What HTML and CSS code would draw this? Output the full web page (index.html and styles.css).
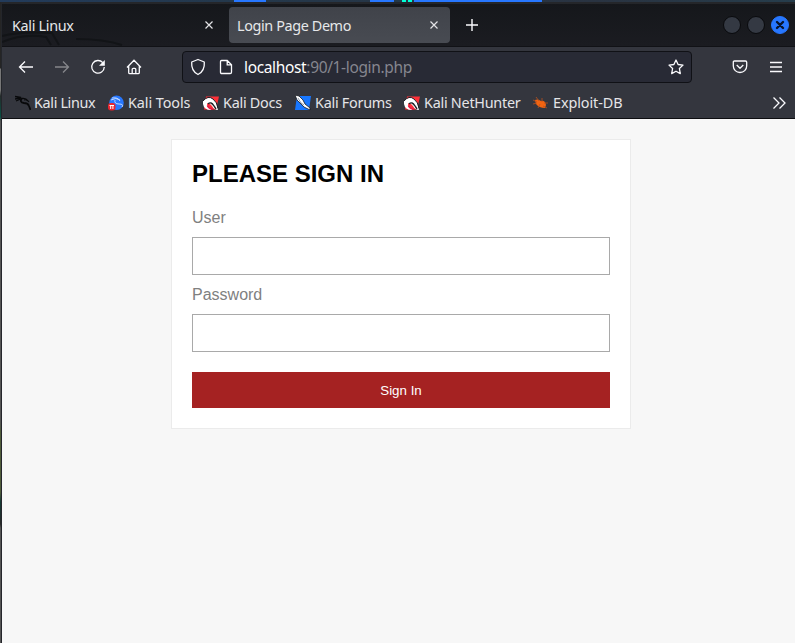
FILE: index.html
```
<!DOCTYPE html>
<html lang="en">
<head>
<meta charset="utf-8">
<title>Login Page Demo</title>
<link rel="stylesheet" href="styles.css">
</head>
<body>
<div class="desktop">
<div class="window">
  <header class="tabs">
    <svg class="dragon-art" width="160" height="16" viewBox="0 0 160 16" fill="none"><path d="M0 6Q18 1 50 3L57 15M0 12Q22 3 44 7L49 15M74 9Q102 9 120 15" stroke="#121417" stroke-width="2"/></svg>
    <div class="tab"><span>Kali Linux</span><svg class="close" width="10" height="10" viewBox="0 0 10 10"><path d="M1.5 1.5l7 7m0-7l-7 7"/></svg></div>
    <div class="tab active"><span class="wide">Login Page Demo</span><svg class="close" width="10" height="10" viewBox="0 0 10 10"><path d="M1.5 1.5l7 7m0-7l-7 7"/></svg></div>
    <svg class="plus" width="14" height="14" viewBox="0 0 14 14"><path d="M7 1v12M1 7h12"/></svg>
    <div class="controls"><i></i><i></i><i class="quit"><svg width="10" height="10" viewBox="0 0 10 10"><path d="M2 2l6 6m0-6L2 8" stroke="#08142b" stroke-width="2.4" stroke-linecap="round"/></svg></i></div>
  </header>
  <nav class="toolbar">
    <svg class="ico" width="16" height="16" viewBox="0 0 16 16"><path d="M15 8H1.700M7 2.500L1.500 8 7 13.500"/></svg>
    <svg class="ico dim" width="16" height="16" viewBox="0 0 16 16"><path d="M1 8h13.300M9 2.500L14.500 8 9 13.500"/></svg>
    <svg class="ico" width="16" height="16" viewBox="0 0 16 16"><path d="M12.800 3.700A6.300 6.300 0 1 0 14.300 8"/><path d="M14.800 1v5.800H9z" fill="#fbfbfe" stroke="none"/></svg>
    <svg class="ico" width="16" height="16" viewBox="0 0 16 16"><path d="M1 8.500L8 1.300 15 8.500M2.700 7.300v6.100q0 1.200 1.200 1.200h8.200q1.200 0 1.200-1.200V7.300M6.200 14.300v-4q0-1 1-1h1.600q1 0 1 1v4"/></svg>
    <div class="address">
      <svg class="ico" width="16" height="18" viewBox="0 0 16 18"><path d="M8 1.500L14.300 4Q15 13 8 16.500 1 13 1.700 4z" stroke-linejoin="round"/></svg>
      <svg class="ico page" width="14" height="16" viewBox="0 0 14 16"><path d="M2.500 1.500h5.700l4.300 4.300v7.400q0 1.300-1.300 1.300H2.800q-1.300 0-1.300-1.300V2.500q0-1 1-1zM8.200 1.500v4.300h4.300"/></svg>
      <span class="url">localhost<b>:90/1-login.php</b></span>
      <svg class="ico star" width="16" height="16" viewBox="0 0 16 16"><path d="M8 1l2.100 4.500 4.900.6-3.600 3.400.9 5.100L8 12.200l-4.300 2.400.9-5.100L1 6.100l4.900-.6z" stroke-linejoin="round"/></svg>
    </div>
    <svg class="ico pocket" width="16" height="16" viewBox="0 0 16 16"><path d="M2.500 2h11q1.200 0 1.200 1.200V7a6.700 6.500 0 0 1-13.400 0V3.200Q1.300 2 2.500 2zM4.700 6L8 9.200 11.300 6" stroke-linejoin="round"/></svg>
    <svg class="ico menu" width="12" height="12" viewBox="0 0 12 12"><path d="M0 1.500h12M0 6h12M0 10.500h12"/></svg>
  </nav>
  <nav class="bookmarks">
    <a class="linux"><svg width="16" height="16" viewBox="0 0 16 16" fill="none" stroke="#08090b"><path d="M0 1.500l6 1M0 4l5-1M1 6l6-2.500Q11 3 13 6" stroke-width="1.300"/><path d="M7 3Q4 7.500 9 8q4 0 5 3l1.500 4" stroke-width="1.800"/><path d="M9 5q3-1 5 2" stroke-width="1.200"/></svg>Kali Linux</a>
    <a class="tools"><svg width="16" height="16" viewBox="0 0 16 16" fill="none"><circle cx="8.500" cy="7.800" r="7.300" fill="#2777ff"/><path d="M3 5q5-3 9 0M4 3q6-1 8 3M7 5q-1 4 4 4t3 3" stroke="#bfd8ff" stroke-width="1"/><rect x="0" y="8" width="7.500" height="7.500" rx="3" fill="#e9252f"/><path d="M1.500 10.500h4.500M2.700 10.500v3.500M4.900 10.500v3.500" stroke="#fff"/></svg>Kali Tools</a>
    <a><svg width="16" height="16" viewBox="0 0 16 16"><path d="M3 1.500h13l-3 13H1z" fill="#ff3038"/><path d="M0 6q5-6 10-2 4 3 4 8l1 3q-4 0-6-4Q5 6 4 9q0 4 4 4v2Q1 15 0 9z" fill="#fff"/><path d="M0 6q5-6 10-2 4 3 5 9" fill="none" stroke="#202127" stroke-width="1"/><path d="M5 9q3-3 6 2l2 3" fill="none" stroke="#202127" stroke-width="1.400"/><path d="M4.500 10.500q1 3 5 3.500" fill="none" stroke="#e51b43" stroke-width="1.800"/></svg>Kali Docs</a>
    <a class="forums"><svg width="16" height="16" viewBox="0 0 16 16"><path d="M2 1h14l-2 14H0z" fill="#1877ff"/><path d="M0 0l4 1 4 4 2 4 5 4v2l-6-3-3-3-4-4z" fill="#fff" stroke="#17191f" stroke-width=".8"/><path d="M3 3l3 5 3 2" stroke="#8b99ad" fill="none"/></svg>Kali Forums</a>
    <a><svg width="16" height="16" viewBox="0 0 16 16"><path d="M3 1.500h13l-3 13H1z" fill="#ff3038"/><path d="M0 6q5-6 10-2 4 3 4 8l1 3q-4 0-6-4Q5 6 4 9q0 4 4 4v2Q1 15 0 9z" fill="#fff"/><path d="M0 6q5-6 10-2 4 3 5 9" fill="none" stroke="#202127" stroke-width="1"/><path d="M5 9q3-3 6 2l2 3" fill="none" stroke="#202127" stroke-width="1.400"/><path d="M4.500 10.500q1 3 5 3.500" fill="none" stroke="#e51b43" stroke-width="1.800"/></svg>Kali NetHunter</a>
    <a class="exploit"><svg width="16" height="16" viewBox="0 0 16 16"><path d="M2 5q3-1.500 6 1 4-1 5 4l-1 3q-6 0-9-4z" fill="#f26411"/><path d="M0 5l4 2M0 9l4-1M3 2l3 4M9 3l0 4M15 8l-4 0M14 13l-4-2M5 13l2-4" stroke="#b85220" stroke-width=".8"/></svg>Exploit-DB</a>
    <svg class="ico more" width="14" height="14" viewBox="0 0 14 14"><path d="M1.500 1.500L7 7l-5.500 5.500M7.500 1.500L13 7l-5.500 5.500"/></svg>
  </nav>
  <main>
    <form class="login">
      <h2>PLEASE SIGN IN</h2>
      <label for="user">User</label><input id="user" type="text">
      <label for="password">Password</label><input id="password" type="password">
      <button type="button">Sign In</button>
    </form>
  </main>
</div>
</div>
</body>
</html>
```
FILE: styles.css
```
* { box-sizing: border-box; }
body { margin: 0; overflow: hidden; font: 14.67px "Noto Sans", sans-serif; }
.desktop {
  height: 643px; padding: 2px 0 0 1px;
  background:
    linear-gradient(90deg, #2777ff 32px, transparent 32px 136px, #2777ff 136px 160px, #243949 160px 168px, #00ffd5 168px 172px, #243949 172px 174px, #00ffd5 174px 178px, #243949 178px 180px, #2777ff 180px 308px, transparent 308px) 234px 0 / 561px 2px no-repeat,
    linear-gradient(90deg, #223b5b, #24384b 30%, #293341 75%, #263d4c) 0 0 / 100% 2px no-repeat,
    linear-gradient(#252525 0 66px, #777 67px 88px, #252c2b 94px, #075044 115px, #555 119px 420px, #505c3b 430px 490px, #163b35 500px, #292929 522px, #555 526px) 0 2px / 2px 641px no-repeat;
}
.window { height: 641px; border-left: 1px solid #24262b; display: flex; flex-direction: column; background: #34363e; }
.tabs { position: relative; height: 45px; flex: none; display: flex; align-items: center; padding: 1px 6px 0 1px; background: linear-gradient(#24262a 0 2px, #15171b 2px, #1b1c21); border-bottom: 1px solid #111216; color: #e6e7e9; }
.dragon-art { position: absolute; left: 0; bottom: 0; }
.tab { position: relative; width: 226px; height: 36px; padding: 0 15px 0 9px; display: flex; align-items: center; justify-content: space-between; }
.tab.active { width: 221px; padding: 0 11px 0 8px; border-radius: 4px; background: linear-gradient(#40434a, #484b52); }
.tab span, .bookmarks a, .url { white-space: nowrap; }
.tab span { font-size: 14.4px; letter-spacing: -.32px; padding-top: 1px; }
.tab .wide { letter-spacing: -.38px; }
.close { fill: none; stroke: #e3e3e6; stroke-width: 1.2; }
.plus { margin-left: 15px; fill: none; stroke: #fbfbfe; stroke-width: 1.4; }
.controls { margin-left: auto; display: flex; gap: 6px; }
.controls i { width: 18px; height: 18px; border: 1px solid #090a0d; border-radius: 50%; background: #343943; display: flex; align-items: center; justify-content: center; }
.controls .quit { background: #2777ff; border-color: #2777ff; }
.toolbar { height: 40px; flex: none; display: flex; align-items: center; padding: 0 13px 0 16px; gap: 20px; }
.ico { flex: none; fill: none; stroke: #fbfbfe; stroke-width: 1.3; }
.dim { stroke: #85868b; }
.address { width: 510px; height: 32px; margin-left: 20px; display: flex; align-items: center; padding: 0 7px; border: 1px solid #101116; border-radius: 4px; background: #282a35; }
.page { margin-left: 13px; }
.url { margin-left: 11px; color: #fff; font-size: 15.5px; letter-spacing: -.35px; }
.url b { font-weight: 400; color: #85868f; }
.star { margin-left: auto; }
.pocket { margin-left: 20px; }
.menu { margin-left: 2px; }
.bookmarks { height: 32px; flex: none; display: grid; grid-template-columns: 93px 95px 92px 109px 129px 1fr 14px; align-items: center; padding: 0 9px 0 13px; border-bottom: 1px solid #0d0e11; color: #e5e5e8; font-size: 14.4px; letter-spacing: -.26px; }
.bookmarks a { display: flex; align-items: center; gap: 4px; }
.bookmarks .linux { gap: 3px; letter-spacing: -.35px; }
.bookmarks .tools, .bookmarks .exploit { letter-spacing: -.08px; }
.bookmarks a svg { flex: none; }
main { flex: 1; padding-top: 20px; background: #f7f7f7; font-family: "Liberation Sans", sans-serif; }
.login { width: 460px; height: 290px; margin-left: 169px; padding: 20px; background: #fff; border: 1px solid #ebebeb; display: flex; flex-direction: column; }
h2 { margin: 0 0 22px; font-size: 24px; line-height: 27px; color: #000; }
label { height: 18px; margin-bottom: 10px; color: #808080; font-size: 16px; line-height: 18px; }
input { height: 38px; flex: none; margin: 0 0 11px; padding: 8px; border: 1px solid #a9a9a9; border-radius: 0; background: #fff; }
button { height: 36px; margin-top: 9px; border: 0; background: #a52222; color: #fff; font: 13.333px "Liberation Sans", sans-serif; }
```
